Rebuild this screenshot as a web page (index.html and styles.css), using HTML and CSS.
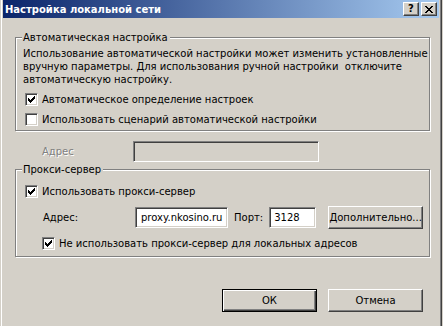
FILE: index.html
```
<!DOCTYPE html>
<html lang="ru">
<head>
    <meta charset="UTF-8">
    <title>Настройка локальной сети</title>
    <link rel="stylesheet" href="styles.css">
</head>
<body>
    <div class="window">
        <div class="titlebar">
            <span class="title">Настройка локальной сети</span>
            <span class="tb-buttons">
                <span class="tb-btn help">?</span>
                <span class="tb-btn close">
                    <svg width="8" height="7" viewBox="0 0 8 7" shape-rendering="crispEdges"><path d="M0 0h2v1h-2zM6 0h2v1h-2zM1 1h2v1h-2zM5 1h2v1h-2zM2 2h4v1h-4zM3 3h2v1h-2zM2 4h4v1h-4zM1 5h2v1h-2zM5 5h2v1h-2zM0 6h2v1h-2zM6 6h2v1h-2z" fill="#000"/></svg>
                </span>
            </span>
        </div>

        <div class="content">
            <!-- Автоматическая настройка -->
            <div class="group auto">
                <span class="group-title">Автоматическая настройка</span>
                <p class="desc">Использование автоматической настройки может изменить установленные<br>вручную параметры. Для использования ручной настройки&nbsp; отключите<br>автоматическую настройку.</p>
                <label class="check first">
                    <span class="box"><svg width="7" height="7" viewBox="0 0 7 7" shape-rendering="crispEdges"><path d="M6 0h1v1h-1zM5 1h2v1h-2zM0 2h1v1h-1zM4 2h3v1h-3zM0 3h2v1h-2zM3 3h3v1h-3zM0 4h5v1h-5zM1 5h3v1h-3zM2 6h1v1h-1z" fill="#000"/></svg></span>
                    Автоматическое определение настроек
                </label>
                <label class="check">
                    <span class="box"></span>
                    Использовать сценарий автоматической настройки
                </label>
            </div>

            <div class="script-row">
                <span class="label disabled">Адрес</span>
                <span class="field wide off"></span>
            </div>

            <!-- Прокси-сервер -->
            <div class="group proxy">
                <span class="group-title">Прокси-сервер</span>
                <label class="check first">
                    <span class="box"><svg width="7" height="7" viewBox="0 0 7 7" shape-rendering="crispEdges"><path d="M6 0h1v1h-1zM5 1h2v1h-2zM0 2h1v1h-1zM4 2h3v1h-3zM0 3h2v1h-2zM3 3h3v1h-3zM0 4h5v1h-5zM1 5h3v1h-3zM2 6h1v1h-1z" fill="#000"/></svg></span>
                    Использовать прокси-сервер
                </label>
                <div class="proxy-row">
                    <span class="label addr">Адрес:</span>
                    <span class="field host">proxy.nkosino.ru</span>
                    <span class="label port">Порт:</span>
                    <span class="field port-field">3128</span>
                    <span class="btn more">Дополнительно...</span>
                </div>
                <label class="check sub">
                    <span class="box"><svg width="7" height="7" viewBox="0 0 7 7" shape-rendering="crispEdges"><path d="M6 0h1v1h-1zM5 1h2v1h-2zM0 2h1v1h-1zM4 2h3v1h-3zM0 3h2v1h-2zM3 3h3v1h-3zM0 4h5v1h-5zM1 5h3v1h-3zM2 6h1v1h-1z" fill="#000"/></svg></span>
                    Не использовать прокси-сервер для локальных адресов
                </label>
            </div>

            <div class="actions">
                <span class="btn default">ОК</span>
                <span class="btn">Отмена</span>
            </div>
        </div>
    </div>
</body>
</html>
```

FILE: styles.css
```
body {
    margin: 0;
    width: 443px;
    height: 326px;
    overflow: hidden;
    background-color: #d4d0c8;
    font-family: 'DejaVu Sans', sans-serif;
    font-size: 10px;
    color: #000;
}

.window {
    width: 442px;
    height: 326px;
    box-sizing: border-box;
    border-left: 1px solid #d4d0c8;
    border-right: 1px solid #404040;
    box-shadow: inset 1px 0 #fff, inset -1px 0 #808080;
    padding: 0 2px;
}

.titlebar {
    height: 18px;
    display: flex;
    align-items: center;
    justify-content: space-between;
    padding: 0 2px 0 2px;
    background: linear-gradient(to right, #0a246a, #a6caf0);
}

.title {
    color: #fff;
    font-weight: bold;
    font-size: 10px;
    white-space: nowrap;
}

.tb-buttons {
    display: flex;
    gap: 2px;
}

.tb-btn {
    width: 16px;
    height: 14px;
    box-sizing: border-box;
    display: flex;
    align-items: center;
    justify-content: center;
    background-color: #d4d0c8;
    border: 1px solid;
    border-color: #fff #404040 #404040 #fff;
    box-shadow: inset -1px -1px #808080;
    font-weight: bold;
    font-size: 10px;
    line-height: 1;
}

.content {
    padding: 19px 0 0 12px;
}

.group {
    position: relative;
    width: 415px;
    box-sizing: border-box;
    border: 1px solid #808080;
    box-shadow: inset 1px 1px #fff, 1px 1px #fff;
}

.group-title {
    position: absolute;
    top: -7px;
    left: 6px;
    padding: 0 2px 0 1px;
    line-height: 13px;
    background-color: #d4d0c8;
    white-space: nowrap;
}

.auto {
    height: 94px;
    padding: 9px 0 0 7px;
}

.desc {
    margin: 0;
    line-height: 13px;
    white-space: nowrap;
}

.check {
    display: flex;
    align-items: center;
    gap: 4px;
    height: 13px;
    margin: 7px 0 0 2px;
    white-space: nowrap;
}

.check.first {
    margin-top: 7px;
}

.proxy .check.first {
    margin-top: 0;
}

.box {
    width: 13px;
    height: 13px;
    box-sizing: border-box;
    flex: none;
    padding: 2px;
    background-color: #fff;
    border: 1px solid;
    border-color: #808080 #fff #fff #808080;
    box-shadow: inset 1px 1px #404040, inset -1px -1px #d4d0c8;
}

.box svg {
    display: block;
}

.script-row {
    display: flex;
    align-items: center;
    height: 21px;
    margin-top: 10px;
    padding-left: 27px;
}

.label {
    white-space: nowrap;
}

.disabled {
    color: #808080;
    text-shadow: 1px 1px #fff;
    width: 91px;
}

.field {
    height: 21px;
    box-sizing: border-box;
    display: flex;
    align-items: center;
    padding: 0 0 0 5px;
    overflow: hidden;
    white-space: nowrap;
    background-color: #fff;
    border: 1px solid;
    border-color: #808080 #fff #fff #808080;
    box-shadow: inset 1px 1px #404040, inset -1px -1px #d4d0c8;
}

.field.off {
    background-color: #d4d0c8;
}

.wide {
    width: 186px;
}

.proxy {
    height: 88px;
    margin-top: 7px;
    padding: 15px 0 0 7px;
}

.proxy-row {
    display: flex;
    align-items: center;
    height: 23px;
    margin-top: 8px;
    padding-left: 20px;
}

.addr {
    width: 92px;
}

.host {
    width: 93px;
}

.port {
    margin: 0 6px 0 6px;
}

.port-field {
    width: 47px;
    padding-left: 4px;
}

.btn {
    width: 95px;
    height: 23px;
    box-sizing: border-box;
    display: flex;
    align-items: center;
    justify-content: center;
    background-color: #d4d0c8;
    border: 1px solid;
    border-color: #fff #404040 #404040 #fff;
    box-shadow: inset -1px -1px #808080;
    white-space: nowrap;
}

.more {
    margin-left: 12px;
}

.check.sub {
    margin: 8px 0 0 19px;
}

.actions {
    display: flex;
    gap: 11px;
    margin: 32px 0 0 207px;
}

.btn.default {
    border: 1px solid #000;
    box-shadow: inset 1px 1px #fff, inset -1px -1px #404040, inset -2px -2px #808080;
}
```
